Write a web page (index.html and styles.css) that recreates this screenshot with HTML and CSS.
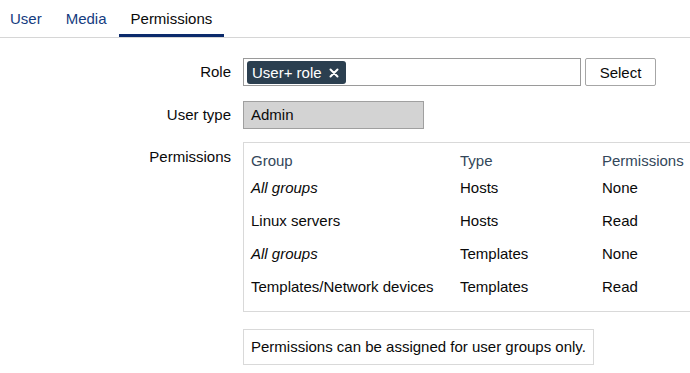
FILE: index.html
```html
<!DOCTYPE html>
<html lang="en">
<head>
    <meta charset="UTF-8">
    <meta name="viewport" content="width=device-width, initial-scale=1.0">
    <title>User permissions</title>
    <link rel="stylesheet" href="styles.css">
</head>
<body>
    <nav class="tabs">
        <a class="tab" href="#">User</a>
        <a class="tab" href="#">Media</a>
        <a class="tab active" href="#">Permissions</a>
    </nav>

    <div class="form">
        <!-- Role -->
        <label class="label label-middle">Role</label>
        <div class="field role-row">
            <div class="multiselect">
                <span class="tag">User+ role
                    <svg class="tag-remove" width="10" height="10" viewBox="0 0 10 10">
                        <path d="M1.5 1.5 L8.5 8.5 M8.5 1.5 L1.5 8.5" stroke="#fff" stroke-width="2" stroke-linecap="round"/>
                    </svg>
                </span>
            </div>
            <button class="btn">Select</button>
        </div>

        <!-- User type -->
        <label class="label label-middle">User type</label>
        <div class="field">
            <div class="readonly">Admin</div>
        </div>

        <!-- Permissions -->
        <label class="label label-top">Permissions</label>
        <div class="field">
            <div class="table-box">
                <table class="perm-table">
                    <thead>
                        <tr>
                            <th class="col-group">Group</th>
                            <th class="col-type">Type</th>
                            <th>Permissions</th>
                        </tr>
                    </thead>
                    <tbody>
                        <tr><td><i>All groups</i></td><td>Hosts</td><td>None</td></tr>
                        <tr><td>Linux servers</td><td>Hosts</td><td>Read</td></tr>
                        <tr><td><i>All groups</i></td><td>Templates</td><td>None</td></tr>
                        <tr><td>Templates/Network devices</td><td>Templates</td><td>Read</td></tr>
                    </tbody>
                </table>
            </div>
            <div class="note">Permissions can be assigned for user groups only.</div>
        </div>
    </div>
</body>
</html>
```

FILE: styles.css
```css
* {
    box-sizing: border-box;
    margin: 0;
    padding: 0;
}

body {
    font-family: "Liberation Sans", Arial, sans-serif;
    font-size: 15px;
    color: #0a0a0a;
    background: #fff;
    overflow: hidden;
}

.tabs {
    display: flex;
    height: 38px;
    border-bottom: 1px solid #d6d6d6;
    margin-left: -2px;
}

.tab {
    display: block;
    height: 37px;
    padding: 0 12px;
    line-height: 37px;
    color: #143b80;
    text-decoration: none;
    border-bottom: 3px solid transparent;
}

.tab.active {
    color: #0a0a0a;
    border-bottom-color: #0b2a6b;
}

.form {
    display: grid;
    grid-template-columns: 231px 1fr;
    column-gap: 12px;
    row-gap: 15px;
    padding-top: 20px;
}

.label {
    text-align: right;
}

.label-middle {
    line-height: 28px;
}

.label-top {
    padding-top: 6px;
    margin-top: -2px;
}

.role-row {
    display: flex;
    gap: 4px;
}

.multiselect {
    width: 338px;
    height: 28px;
    border: 1px solid #9a9a9a;
    padding: 2px 3px;
}

.tag {
    display: inline-flex;
    align-items: center;
    height: 23px;
    padding: 0 7px 0 5px;
    background: #2b3f50;
    color: #fff;
    border-radius: 3px;
}

.tag-remove {
    margin-left: 7px;
}

.btn {
    width: 71px;
    height: 28px;
    font-family: inherit;
    font-size: 15px;
    color: #0a0a0a;
    background: #fff;
    border: 1px solid #a6a6a6;
    border-radius: 2px;
}

.readonly {
    width: 181px;
    height: 28px;
    line-height: 26px;
    padding: 0 7px;
    background: #d3d3d3;
    border: 1px solid #a0a0a0;
}

.table-box {
    width: 470px;
    border: 1px solid #d9d9d9;
    padding-bottom: 7px;
    margin-top: -2px;
}

.perm-table {
    border-collapse: collapse;
}

.perm-table th,
.perm-table td {
    text-align: left;
    font-weight: normal;
    line-height: 18px;
    white-space: nowrap;
}

.perm-table th {
    color: #33475a;
    padding: 9px 7px 2px;
}

.perm-table td {
    padding: 7px 7px 8px;
}

.col-group {
    width: 209px;
}

.col-type {
    width: 142px;
}

.note {
    display: inline-block;
    margin-top: 17px;
    height: 36px;
    line-height: 34px;
    padding: 0 7px;
    border: 1px solid #d9d9d9;
}
```
